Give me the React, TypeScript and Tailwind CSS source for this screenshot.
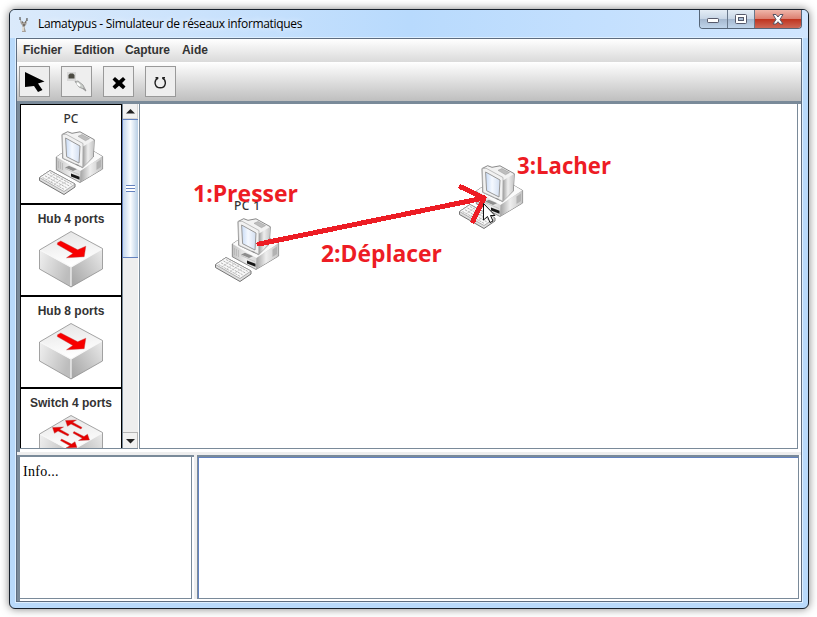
import React from "react";

const sans = "font-['Liberation_Sans',sans-serif]";

function PcShape() {
  return (
    <g strokeLinejoin="round">
      <path d="M17.3 26 L24 21.5 L55 20.5 L63.6 25.5 V38 L41 51.5 L17.3 38.8Z" fill="url(#base)" stroke="#777" strokeWidth=".8" />
      <path d="M17.6 26 L24 21.5 L55 20.5 L63.3 25.5 L41.5 40Z" fill="#fafafa" />
      <path d="M41.5 40 L63.3 25.5 V38 L41 51.3Z" fill="url(#side)" />
      <path d="M57.5 31.5 l4.5 -3 v7.5 l-4.5 3z" fill="#b2b2b2" />
      <path d="M19.5 30v7M21.5 31v7M23.5 32v7" stroke="#b5b5b5" strokeWidth=".8" />
      <path d="M26 36.5 L30 34.8 L38 38.2 L34 40Z" fill="#8e8e8e" />
      <path d="M26 37.5 L40 43.5" stroke="#bdbdbd" strokeWidth=".8" />
      <path d="M32 42.5 L40.5 45.7 V48.7 L32 45.5Z" fill="#161616" />
      <path d="M23 3.5 L28.7 .7 L33 2.3 L41 .8 L55.3 8.7 L54.3 26 L43.7 36.6 L23.7 27.3Z" fill="#f2f2f2" stroke="#6c6c6c" strokeWidth=".8" />
      <path d="M44 15.5 L55 8.9 L54 25.8 L44 36.2Z" fill="url(#side)" />
      <path d="M39 5.3 L43 3.5 L50.5 7.6 L46.5 9.7Z" fill="#bdbdbd" stroke="#9a9a9a" strokeWidth=".5" />
      <path d="M23.3 3.7 L27 3.2 L44 12.5 L43.6 36.2 L24 27.2Z" fill="#f1f1f1" stroke="#a5a5a5" strokeWidth=".7" />
      <path d="M26.6 7 L41 15 L40 32 L27.6 25.7Z" fill="url(#screen)" stroke="#999" strokeWidth="1" />
      <path d="M37 33.4 l3 1.2" stroke="#888" strokeWidth=".8" />
      <path d="M.5 46.5 L11 39.5 L36 53 V56 L25 63.5 L.5 49.5Z" fill="#dedede" stroke="#666" strokeWidth=".9" />
      <path d="M.5 46.5 L11 39.5 L36 53 L25 60.5Z" fill="#f8f8f8" stroke="#888" strokeWidth=".6" />
      <path d="M3.5 46.5 L25 58.3M6 44.8 L28 57M8.5 43 L31 55.3M11 41.5 L33 53.5" stroke="#a5a5a5" strokeWidth=".8" strokeDasharray="2.3 .9" />
      <path d="M7 49 L16 42.5M11 51.5 L20 45M15 53.5 L24 47.5M19 55.5 L28 50" stroke="#bbb" strokeWidth=".6" />
    </g>
  );
}

function Defs() {
  return (
    <svg className="absolute h-0 w-0">
      <defs>
        <linearGradient id="base"><stop stopColor="#c2c2c2" /><stop offset=".3" stopColor="#ededed" /><stop offset="1" stopColor="#aaa" /></linearGradient>
        <linearGradient id="side"><stop stopColor="#a2a2a2" /><stop offset=".45" stopColor="#eee" /><stop offset="1" stopColor="#c5c5c5" /></linearGradient>
        <linearGradient id="screen"><stop stopColor="#c7daf5" /><stop offset=".45" stopColor="#f5f9ff" /><stop offset="1" stopColor="#d2def0" /></linearGradient>
        <linearGradient id="boxL" x1="0" x2="1" y1="0" y2=".4"><stop stopColor="#f0f0f0" /><stop offset="1" stopColor="#bdbdbd" /></linearGradient>
        <linearGradient id="boxR" x1="0" x2="1" y1=".8" y2="0"><stop stopColor="#a8a8a8" /><stop offset="1" stopColor="#ebebeb" /></linearGradient>
        <linearGradient id="boxT" x1="0" x2=".2" y1="0" y2="1"><stop stopColor="#e4e4e4" /><stop offset="1" stopColor="#fff" /></linearGradient>
      </defs>
    </svg>
  );
}

function Box({ children }: { children: React.ReactNode }) {
  return (
    <svg width="64" height="57" viewBox="0 0 64 57" className="block shrink-0">
      <path d="M.5 19 L32 36 V56 L.5 38Z" fill="url(#boxL)" />
      <path d="M63.5 17.5 L32 36 V56 L63.5 38Z" fill="url(#boxR)" />
      <path d="M32 .5 L63.5 17.5 L32 36 L.5 19Z" fill="url(#boxT)" />
      <path d="M1 19 L32 36 L63 18M32 36V55" fill="none" stroke="#f7f7f7" strokeWidth="1.2" />
      <path d="M32 .5 L63.5 17.5 V38 L32 56 L.5 38 V19Z" fill="none" stroke="#8d8d8d" strokeWidth=".8" />
      {children}
    </svg>
  );
}

function HubIcon() {
  return <Box><path d="M18.5 11.8 L21.8 10 L38.7 18.8 L46.8 15.2 L45.2 25.7 L27.5 26.8 L33.8 22.4 L18.3 13.6Z" fill="#f80000" stroke="#b54040" strokeWidth=".4" /></Box>;
}

function SwitchIcon() {
  const a = "M0 0 L10 5 L13.5 2.7 L15.5 8.5 L4.5 9 L8.3 6.8 L-1 1.6Z";
  return (
    <Box>
      <g fill="#e60000" stroke="#b54040" strokeWidth=".4">
        <path d={a} transform="translate(42 14) rotate(180)" />
        <path d={a} transform="translate(29 21) rotate(180)" />
        <path d={a} transform="translate(35 16.5)" />
        <path d={a} transform="translate(22.5 24)" />
      </g>
    </Box>
  );
}

function PaletteItem({ label, pc, children }: { label: string; pc?: boolean; children: React.ReactNode }) {
  return (
    <div className={`flex shrink-0 flex-col items-center border border-black bg-white ${pc ? "h-[100px]" : "h-[92px]"}`}>
      <div className={`h-[26px] w-full text-center text-[12px] leading-[15px] text-[#333] ${pc ? "pt-[6px] font-['Noto_Sans',sans-serif] font-medium" : "pt-[7px] font-bold " + sans}`}>{label}</div>
      {children}
    </div>
  );
}

function ToolButton({ children }: { children: React.ReactNode }) {
  return <div className="flex h-[31px] w-[31px] items-center justify-center border border-[#999] bg-[#eee]">{children}</div>;
}

function ScrollBar() {
  return (
    <div className="flex w-4 shrink-0 flex-col border-l border-[#7a8a99] bg-[#eee]">
      <div className="flex h-[15px] items-center justify-center border-r border-b border-[#d5d5d5] bg-[#f1f1f1]">
        <svg width="9" height="5"><path d="M0 4.5 L4.5 0 L9 4.5Z" fill="#222" /></svg>
      </div>
      <div className="-ml-px flex h-[139px] flex-col items-center border border-r-0 border-[#6382bf] bg-linear-to-r from-[#c4d6ec] via-[#fafdff] to-[#b8cfe5] pt-[65px]">
        <div className="h-[7px] w-[9px] bg-[repeating-linear-gradient(to_bottom,#6382bf_0px,#6382bf_1px,#fff_1px,#fff_3px)]" />
      </div>
      <div className="flex-1" />
      <div className="flex h-4 items-center justify-center border-t border-r border-[#b5b5b5] bg-[#f1f1f1] pt-px">
        <svg width="9" height="5"><path d="M0 0 L4.5 4.5 L9 0Z" fill="#222" /></svg>
      </div>
    </div>
  );
}

function TitleBar() {
  return (
    <div className="flex h-7 shrink-0 items-start bg-linear-to-r from-[#dbeafb] via-[#b8dafd] to-[#d0e6ff]">
      <div className="flex h-7 flex-1 items-center pl-2">
        <svg width="12" height="16" viewBox="0 0 12 16" className="mt-px mr-[8px]">
          <path d="M2 1 L4 5 L7 5 L9 1 L8.5 7 L6.5 10 L8 15 L4 15 L4.5 9 L2.5 6Z" fill="#a6a09a" />
          <path d="M2 0V3M9 1V4M4 5h1M7 5h1M5 8h2" stroke="#46423e" />
          <path d="M5 10 L5 14" stroke="#eee8de" strokeWidth="1.5" />
        </svg>
        <span className="font-['Open_Sans',sans-serif] text-[12px] tracking-[-0.32px] whitespace-nowrap text-black [text-shadow:0_0_6px_white]">Lamatypus - Simulateur de réseaux informatiques</span>
      </div>
      <div className="mr-[6px] flex h-[19px] overflow-hidden rounded-b-[4px] border border-t-0 border-[#556578]">
        <div className="flex w-[28px] items-center justify-center border-r border-[#68788b] bg-[linear-gradient(#e4edf6,#c8d6e6_49%,#a4b7ce_50%,#bfd4ea)]">
          <svg width="13" height="6" className="mt-1"><rect x=".5" y=".5" width="11" height="4" rx=".7" fill="#fff" stroke="#55596a" /></svg>
        </div>
        <div className="flex w-[27px] items-center justify-center border-r border-[#68788b] bg-[linear-gradient(#e4edf6,#c8d6e6_49%,#a4b7ce_50%,#bfd4ea)]">
          <svg width="12" height="10"><rect x=".5" y=".5" width="11" height="9" rx="1" fill="#fff" stroke="#55596a" /><rect x="3.5" y="3.5" width="5" height="3" fill="#a9bdd4" stroke="#55596a" /></svg>
        </div>
        <div className="flex w-[46px] items-center justify-center bg-[linear-gradient(#efb6aa,#dc8071_48%,#bf321d_50%,#ce6856)]">
          <svg width="12" height="11" viewBox="0 0 12 11"><path d="M1 .5H4L6 3 L8 .5H11L8 5.5 L11 10H8L6 7.7 L4 10H1L4 5.5Z" fill="#fff" stroke="#555465" /></svg>
        </div>
      </div>
    </div>
  );
}

export default function App() {
  return (
    <div className="relative h-[617px] w-[817px] overflow-hidden bg-white pt-[9px] pl-[9px]">
      <Defs />
      <div className="flex h-[600px] w-[800px] flex-col overflow-hidden rounded-[6px] border border-[#17202b] bg-[#b9dafb] shadow-[0_0_9px_rgba(0,0,0,0.5)]">
        <TitleBar />
        <div className="mx-[6px] flex h-[564px] w-[786px] flex-col border border-[#5e6d80] bg-white shadow-[0_0_0_1px_#deefff]">
          <div className={`flex h-[23px] shrink-0 bg-linear-to-b from-white to-[#dadada] pt-[3px] pl-[6px] text-[12px] leading-4 font-bold tracking-[-0.06px] text-[#333] ${sans}`}>
            <span className="w-[51px]">Fichier</span>
            <span className="w-[51px]">Edition</span>
            <span className="w-[57px]">Capture</span>
            <span>Aide</span>
          </div>
          <div className="flex h-[39px] shrink-0 gap-[11px] bg-linear-to-b from-white to-[#bfbfbf] pt-[4px] pl-[2px]">
            <ToolButton><svg width="20" height="20"><path d="M0 0 L19.5 9.5 L13 11.5 L17.5 18 L13 20 L9 14 L0 15Z" fill="#000" /></svg></ToolButton>
            <ToolButton>
              <svg width="20" height="20">
                <path d="M0 0h9v9H0z" fill="#d8d8d8" /><path d="M1.5 3 L3 1.5H6 L7.5 3V6.5H1.5Z" fill="#4b4a42" />
                <path d="M8 9.5 L11 9 L16 13 L18.5 18 L12 15Z" fill="#c9cdc9" stroke="#8a8a8a" strokeWidth=".7" /><path d="M10 11 L13 14" stroke="#fff" strokeWidth="2" /><path d="M16 16 L19 19" stroke="#999" strokeWidth="1.3" />
              </svg>
            </ToolButton>
            <ToolButton><svg width="14" height="14" className="mt-[2px]"><path d="M3 1 L7 4.6 L11 1 L13.5 3.5 L10 7 L13.5 10.5 L11 13.2 L7 9.7 L3 13.2 L.5 10.5 L4 7 L.5 3.5Z" fill="#000" /></svg></ToolButton>
            <ToolButton><svg width="13" height="13" className="mt-px"><path d="M1.5 1.8H4.3M4.2 2.2 C-.8 4.5 .5 11.8 6.3 11.8 S13 4.5 8.3 2.2M8.2 1.8H11" fill="none" stroke="#222" strokeWidth="1.4" /></svg></ToolButton>
          </div>
          <div className="flex h-[351px] shrink-0 border-t-[3px] border-l-[3px] border-[#7a8a99] border-b-white bg-white">
            <div className="flex h-[345px] w-[118px] border-b border-[#7a8a99]">
              <div className="flex h-[344px] w-[102px] flex-col overflow-hidden">
                <PaletteItem label="PC" pc><svg width="65" height="65" className="ml-px shrink-0"><PcShape /></svg></PaletteItem>
                <PaletteItem label="Hub 4 ports"><HubIcon /></PaletteItem>
                <PaletteItem label="Hub 8 ports"><HubIcon /></PaletteItem>
                <PaletteItem label="Switch 4 ports"><SwitchIcon /></PaletteItem>
              </div>
              <ScrollBar />
            </div>
            <div className="ml-px h-[345px] w-[659px] border-r border-b border-l border-[#7a8a99] bg-white" />
          </div>
          <div className="h-[3px] shrink-0 bg-[#eee]" />
          <div className="flex h-[147px] shrink-0">
            <div className="h-[146px] w-[177px] border-t-2 border-l-[3px] border-[#7a8a99]">
              <div className="h-[142px] w-[172px] border-r border-b border-[#7a8a99] pt-[5px] pl-[3px] font-['Liberation_Serif',serif] text-[14px] leading-5 tracking-[0.3px] text-black">Info...</div>
            </div>
            <div className="h-[144px] w-[3px] bg-[#eee]" />
            <div className="h-[144px] w-[602px] border-t-2 border-r border-b border-l border-[#7a8a99]">
              <div className="h-full border-t border-l border-[#6382bf]" />
            </div>
          </div>
        </div>
      </div>
      <svg width="817" height="617" className="absolute top-0 left-0">
        <text x="234" y="210" fontSize="12" fontWeight="500" fill="#333" fontFamily="Noto Sans" textLength="26">PC 1</text>
        <g transform="translate(215 218)"><PcShape /></g>
        <g transform="translate(459 165)"><PcShape /></g>
        <path d="M259 244 L484 198M461 187 L484 198 L473 221" fill="none" stroke="#ed1c24" strokeWidth="5" strokeLinecap="round" strokeLinejoin="round" shapeRendering="crispEdges" />
        <path d="M483.5 203.5 V220 L487.5 216.5 L490 222.5 L493 221 L490.5 215.5 H495Z" fill="#fff" stroke="#111" strokeWidth="1" />
        <g fill="#ed1c24" fontFamily="Open Sans" fontSize="23" fontWeight="700">
          <text x="193" y="202" textLength="105" lengthAdjust="spacingAndGlyphs">1:Presser</text>
          <text x="321" y="262" textLength="121" lengthAdjust="spacingAndGlyphs">2:Déplacer</text>
          <text x="517" y="174" textLength="94" lengthAdjust="spacingAndGlyphs">3:Lacher</text>
        </g>
      </svg>
    </div>
  );
}
